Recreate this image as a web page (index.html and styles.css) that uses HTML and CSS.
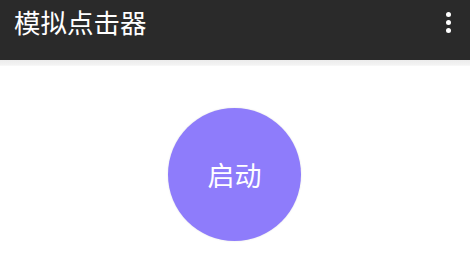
FILE: index.html
```html
<!DOCTYPE html>
<html lang="zh">
<head>
<meta charset="utf-8">
<link rel="stylesheet" href="styles.css">
</head>
<body>
<header class="toolbar">
  <h1 class="title">模拟点击器</h1>
  <div class="menu" aria-label="更多">
    <span class="dot"></span><span class="dot"></span><span class="dot"></span>
  </div>
</header>
<div class="shadow"></div>
<main class="content">
  <button class="start">启动</button>
</main>
</body>
</html>
```
FILE: styles.css
```css
html, body {
  margin: 0;
  padding: 0;
  background: #ffffff;
  width: 470px;
  height: 262px;
  overflow: hidden;
  font-family: "Noto Sans CJK SC", "Noto Sans", sans-serif;
}
.toolbar {
  height: 60px;
  background: #2a2a2a;
  display: flex;
  align-items: center;
  justify-content: space-between;
  padding: 0 19px 0 14px;
  box-sizing: border-box;
}
.title {
  margin: 0;
  margin-top: -15px;
  color: #ffffff;
  font-size: 26.5px;
  font-weight: 400;
  line-height: 1;
}
.menu {
  display: flex;
  flex-direction: column;
  gap: 3px;
  margin-top: -16px;
}
.dot {
  width: 5px;
  height: 5px;
  border-radius: 50%;
  background: #ffffff;
}
.shadow {
  height: 6px;
  background: linear-gradient(#ececec, #f3f3f3 80%, #fafafa);
}
.content {
  display: flex;
  justify-content: center;
  padding-top: 42px;
  padding-right: 1px;
}
.start {
  width: 133px;
  height: 133px;
  border-radius: 50%;
  border: none;
  background: #8e7cfb;
  color: #ffffff;
  font-family: "Noto Sans CJK SC", "Noto Sans", sans-serif;
  font-size: 27px;
  padding: 0;
  box-shadow: 0 0 2px rgba(0, 0, 0, 0.12);
}
```
